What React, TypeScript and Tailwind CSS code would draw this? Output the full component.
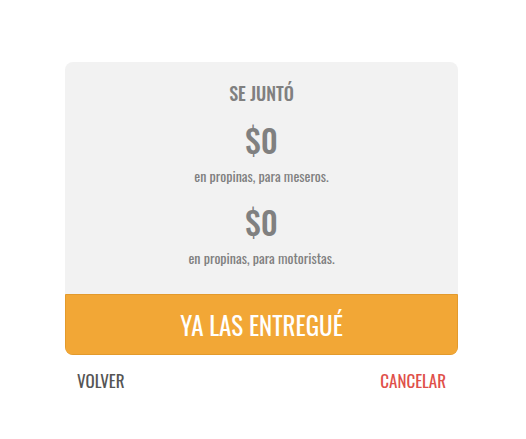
import React from "react";

const font = {
  fontFamily: '"Oswald", "Liberation Sans Narrow", "DejaVu Sans Condensed", "Roboto", sans-serif',
};

function Total({ amount, label }: { amount: string; label: string }) {
  return (
    <div className="flex flex-col items-center">
      <div className="text-[32px] leading-[48px] font-medium text-[#808080]">{amount}</div>
      <div className="mt-[2px] text-[14px] leading-[20px] text-[#808080]">{label}</div>
    </div>
  );
}

export default function App() {
  return (
    <div className="w-[526px] h-[439px] bg-white pt-[62px] pl-[65px]" style={font}>
      <div className="w-[393px]">
        <div className="rounded-[8px] overflow-hidden bg-[#f2f2f2]">
          <div className="flex flex-col items-center pt-[18px] pb-[26px]">
            <div className="text-[18px] leading-[26px] font-medium text-[#808080]">SE JUNTÓ</div>
            <div className="mt-[10px]">
              <Total amount="$0" label="en propinas, para meseros." />
            </div>
            <div className="mt-[12px]">
              <Total amount="$0" label="en propinas, para motoristas." />
            </div>
          </div>
          <button className="w-full h-[61px] bg-[#f2a736] border border-[#e39a2c] text-white text-[25px] rounded-b-[6px]">
            YA LAS ENTREGUÉ
          </button>
        </div>
        <div className="flex justify-between px-[12px] mt-[14px] text-[17px] leading-[24px]">
          <span className="text-[#555555]">VOLVER</span>
          <span className="text-[#e0504a]">CANCELAR</span>
        </div>
      </div>
    </div>
  );
}
